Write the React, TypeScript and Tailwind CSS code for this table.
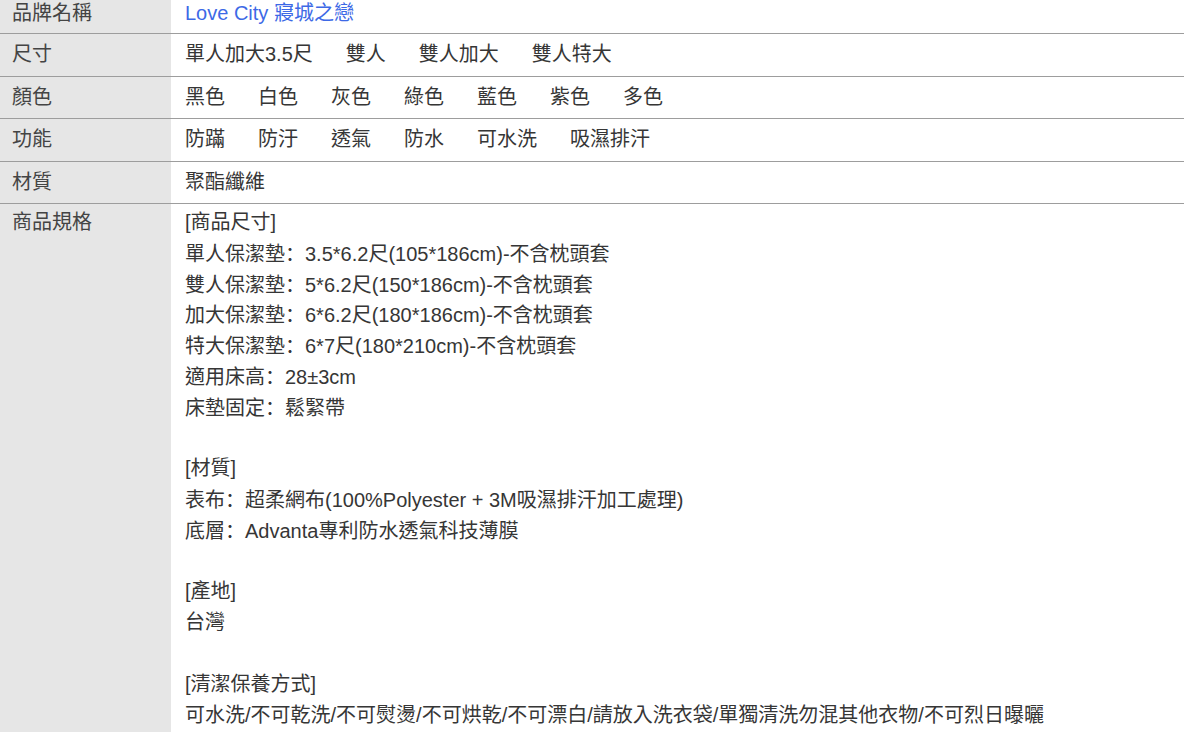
import React from "react";

type Row = {
  label: string;
  options?: string[];
  text?: string;
  link?: string;
  lines?: string[];
};

const rows: Row[] = [
  { label: "品牌名稱", link: "Love City 寢城之戀" },
  { label: "尺寸", options: ["單人加大3.5尺", "雙人", "雙人加大", "雙人特大"] },
  { label: "顏色", options: ["黑色", "白色", "灰色", "綠色", "藍色", "紫色", "多色"] },
  { label: "功能", options: ["防蹣", "防汙", "透氣", "防水", "可水洗", "吸濕排汗"] },
  { label: "材質", text: "聚酯纖維" },
  {
    label: "商品規格",
    lines: [
      "[商品尺寸]",
      "單人保潔墊：3.5*6.2尺(105*186cm)-不含枕頭套",
      "雙人保潔墊：5*6.2尺(150*186cm)-不含枕頭套",
      "加大保潔墊：6*6.2尺(180*186cm)-不含枕頭套",
      "特大保潔墊：6*7尺(180*210cm)-不含枕頭套",
      "適用床高：28±3cm",
      "床墊固定：鬆緊帶",
      "",
      "[材質]",
      "表布：超柔網布(100%Polyester + 3M吸濕排汗加工處理)",
      "底層：Advanta專利防水透氣科技薄膜",
      "",
      "[產地]",
      "台灣",
      "",
      "[清潔保養方式]",
      "可水洗/不可乾洗/不可熨燙/不可烘乾/不可漂白/請放入洗衣袋/單獨清洗勿混其他衣物/不可烈日曝曬",
    ],
  },
];

// colon drawn with the SC face so it sits left in its box, as in the source
function SpecLine({ text }: { text: string }) {
  const idx = text.indexOf("：");
  if (idx < 0) return <>{text}</>;
  return (
    <>
      {text.slice(0, idx)}
      <span className="font-['Noto_Sans_CJK_SC',sans-serif]">：</span>
      {text.slice(idx + 1)}
    </>
  );
}

export default function App() {
  const last = rows.length - 1;
  return (
    <div className="w-[1184px] h-[732px] overflow-hidden bg-white font-['Liberation_Sans','Noto_Sans_CJK_TC',sans-serif] text-[20px] leading-[30.8px] text-[#363636]">
      <div className="-mt-[5px]">
        {rows.map((row, i) => {
          const pad =
            i === 0 ? "pt-[2.5px] pb-[5.2px]" : i === last ? "pt-[2.5px] pb-[8px]" : "pt-[5px] pb-[5.7px]";
          return (
            <div key={row.label} className={`flex ${i < last ? "border-b border-[#9d9d9d]" : ""}`}>
              <div
                className={`w-[171px] shrink-0 bg-[#e6e6e6] pl-[12px] text-[#444] ${pad} ${
                  i === last ? "min-h-[600px]" : ""
                }`}
              >
                {row.label}
              </div>
              <div className={`flex-1 pl-[14px] ${pad}`}>
                {row.link && <a className="text-[#3d69e6]">{row.link}</a>}
                {row.options && (
                  <div className="flex gap-x-[33px]">
                    {row.options.map((o) => (
                      <span key={o}>{o}</span>
                    ))}
                  </div>
                )}
                {row.text && <span>{row.text}</span>}
                {row.lines &&
                  row.lines.map((l, j) => (
                    <div key={j} className="h-[30.8px] whitespace-nowrap">
                      <SpecLine text={l} />
                    </div>
                  ))}
              </div>
            </div>
          );
        })}
      </div>
    </div>
  );
}
